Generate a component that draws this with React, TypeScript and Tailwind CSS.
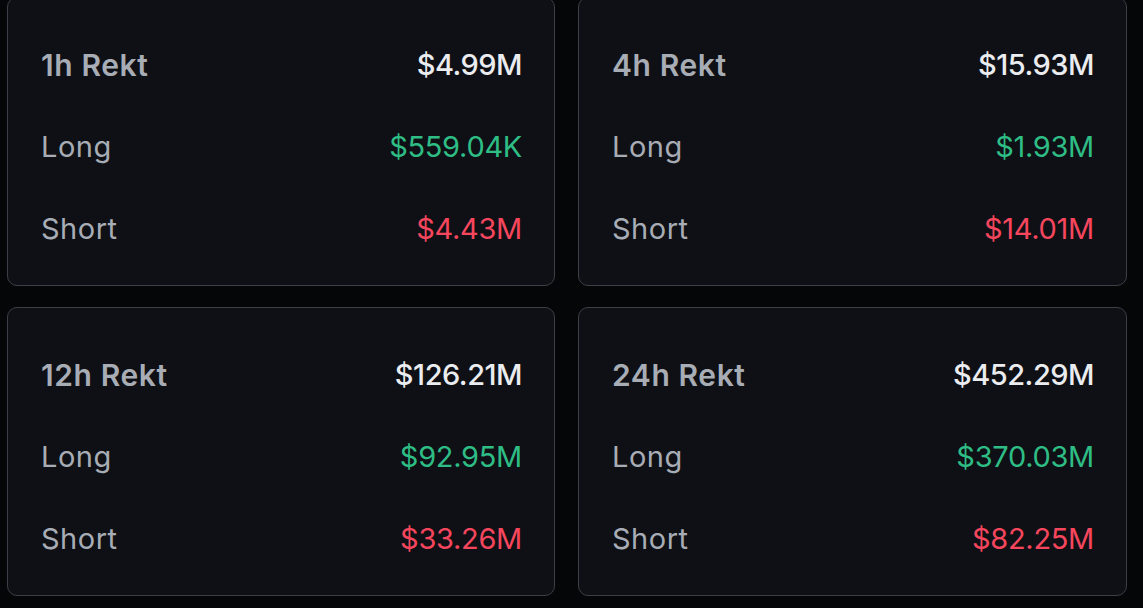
const CARDS = [
  { title: '1h Rekt', total: '$4.99M', long: '$559.04K', short: '$4.43M' },
  { title: '4h Rekt', total: '$15.93M', long: '$1.93M', short: '$14.01M' },
  { title: '12h Rekt', total: '$126.21M', long: '$92.95M', short: '$33.26M' },
  { title: '24h Rekt', total: '$452.29M', long: '$370.03M', short: '$82.25M' },
]

function RektCard({ title, total, long, short }: (typeof CARDS)[number]) {
  return (
    <div className="rounded-[10px] border border-[#3b3f46] bg-[#0e1015] pl-[33px] pr-[32px] pt-[26px] pb-[15px]">
      <div className="flex h-[82px] items-center justify-between">
        <span className="text-[30px] font-semibold tracking-[0.6px] text-[#a8adb5]">{title}</span>
        <span className="font-medium tracking-[-0.5px] text-[#eaecef]">{total}</span>
      </div>
      <div className="flex h-[82px] items-center justify-between">
        <span className="tracking-[0.5px] text-[#a8adb5]">Long</span>
        <span className="tracking-[-0.3px] text-[#2ebd85]">{long}</span>
      </div>
      <div className="flex h-[82px] items-center justify-between">
        <span className="tracking-[0.5px] text-[#a8adb5]">Short</span>
        <span className="tracking-[-0.3px] text-[#f6465d]">{short}</span>
      </div>
    </div>
  )
}

export default function App() {
  return (
    <div className="h-[608px] w-[1143px] overflow-hidden bg-[#050608] font-['Inter',sans-serif] text-[29px]">
      <div className="-mt-[3px] grid grid-cols-[548px_549px] gap-x-[23px] gap-y-[21px] pl-[7px]">
        {CARDS.map((card) => (
          <RektCard key={card.title} {...card} />
        ))}
      </div>
    </div>
  )
}
